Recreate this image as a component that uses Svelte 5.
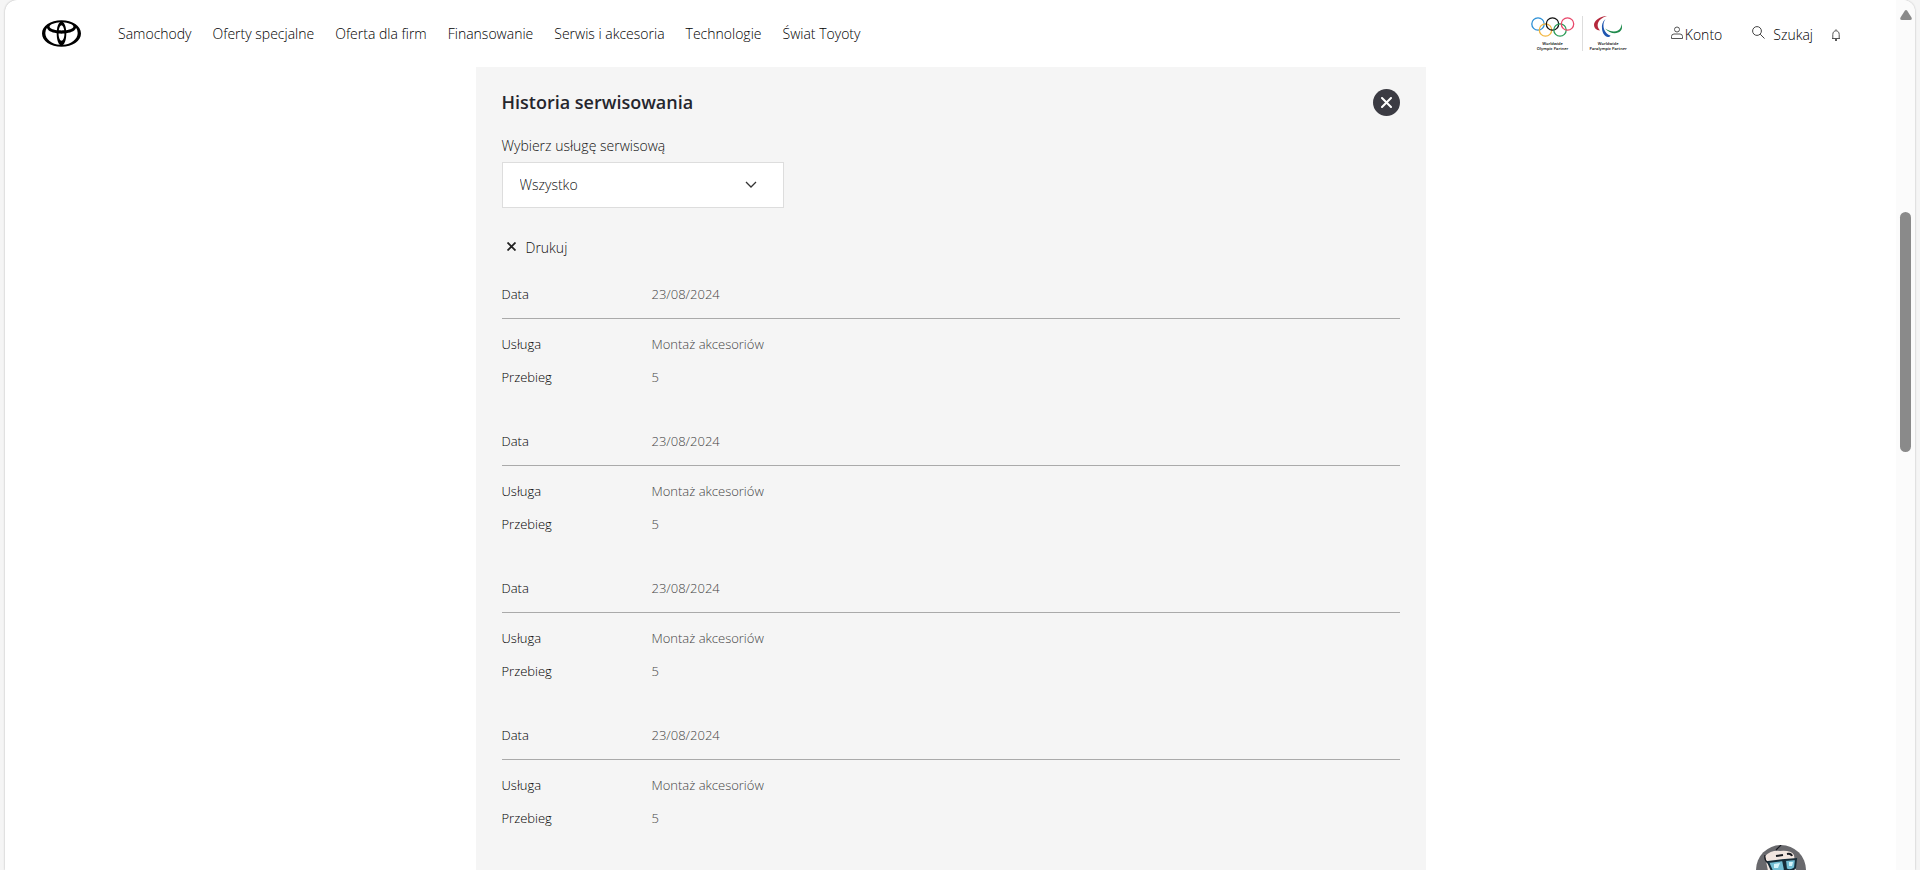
<script lang="ts">
  const navItems = [
    "Samochody",
    "Oferty specjalne",
    "Oferta dla firm",
    "Finansowanie",
    "Serwis i akcesoria",
    "Technologie",
    "Świat Toyoty",
  ];

  const services = ["Wszystko", "Montaż akcesoriów"];

  const history = [
    { date: "23/08/2024", service: "Montaż akcesoriów", mileage: 5 },
    { date: "23/08/2024", service: "Montaż akcesoriów", mileage: 5 },
    { date: "23/08/2024", service: "Montaż akcesoriów", mileage: 5 },
    { date: "23/08/2024", service: "Montaż akcesoriów", mileage: 5 },
  ];

  let selected = $state("Wszystko");
  let open = $state(true);

  const visible = $derived(
    selected === "Wszystko" ? history : history.filter((h) => h.service === selected)
  );
</script>

<div class="frame">
  <div class="page">
    <header class="topbar">
      <a href="/" class="logo" aria-label="Toyota">
        <svg viewBox="0 3.8 24 16.4" width="39" height="27">
          <path d="M12 3.848C5.223 3.848 0 7.298 0 12c0 4.702 5.224 8.152 12 8.152S24 16.702 24 12c0-4.702-5.223-8.152-12-8.152zm7.334 3.839c0 1.08-1.725 1.913-4.488 2.246-.26-2.58-1.005-4.279-1.963-4.913 2.948.184 6.45 1.227 6.45 2.667zM12 16.401c-.96 0-1.746-1.5-1.808-4.389.577.047 1.18.072 1.808.072.628 0 1.23-.025 1.807-.072-.061 2.89-.847 4.389-1.807 4.389zm0-6.308c-.59 0-1.155-.019-1.69-.054.261-1.728.92-3.15 1.69-3.15.77 0 1.428 1.422 1.689 3.15-.535.034-1.1.054-1.689.054zm-.883-5.075c-.958.634-1.703 2.332-1.965 4.915-2.763-.333-4.488-1.166-4.488-2.246 0-1.44 3.503-2.484 6.453-2.669zM2.037 11.68a5.265 5.265 0 011.048-3.164c.27 1.547 2.522 2.881 5.972 3.37V12c0 3.772.879 6.203 2.087 6.97-5.107-.321-9.107-3.48-9.107-7.29zm10.823 7.29c1.207-.767 2.087-3.198 2.087-6.97v-.115c3.447-.488 5.704-1.826 5.972-3.37a5.26 5.26 0 011.049 3.165c-.004 3.81-4.008 6.969-9.109 7.29z" />
        </svg>
      </a>

      <nav>
        {#each navItems as item}
          <a href="/">{item}</a>
        {/each}
      </nav>

      <div class="partners">
        <div class="partner">
          <svg viewBox="0 0 44 22" width="44" height="22" fill="none" stroke-width="1.3">
            <circle cx="7" cy="8" r="6.2" stroke="#2b8fd6" />
            <circle cx="14.5" cy="14" r="6.2" stroke="#f2b740" />
            <circle cx="21.5" cy="8" r="6.2" stroke="#111" />
            <circle cx="29" cy="14" r="6.2" stroke="#2a9c57" />
            <circle cx="36.5" cy="8" r="6.2" stroke="#e8476a" />
          </svg>
          <p>Worldwide<br />Olympic Partner</p>
        </div>
        <div class="partner">
          <svg viewBox="0 0 30 22" width="30" height="22">
            <path fill="#b5283c" d="M14 0C6 .5 1 5 1 9c0 3 2 5 6 5.600C5 12 4 10 5 7 6 4 9 1.500 14 0z" />
            <path fill="#1f57b0" d="M12.500 3C9.500 5.500 8.500 9 9 13c.5 4.500 3 7.500 6 8 1 0 2-.5 2.500-1.500C13 18.500 10 13 10.500 8.500c.2-2.500 1-4 2-5.500z" />
            <path fill="#1f8a4c" d="M28 8c2 3.500 1 7-3 8.600-4 1.500-9 .2-13-4.100 5 3 9.500 3.700 13 2 2.500-1.500 3.500-3.500 3-6.500z" />
          </svg>
          <p>Worldwide<br />Paralympic Partner</p>
        </div>
      </div>

      <div class="tools">
        <a href="/konto" class="account">
          <svg viewBox="0 0 12 14" width="12" height="14" fill="none" stroke="#555">
            <circle cx="6" cy="3.500" r="2.500" />
            <path d="M.5 12.500v-2q0-2.500 2.500-2.500h6q2.500 0 2.500 2.500v2z" />
          </svg>
          Konto
        </a>
        <button class="search">
          <svg viewBox="0 0 13 13" width="13" height="13" fill="none" stroke="#444">
            <circle cx="5" cy="5" r="4.400" />
            <path d="M8.200 8.200l4.300 4.300" />
          </svg>
          Szukaj
        </button>
        <button class="bell" aria-label="Powiadomienia">
          <svg viewBox="0 0 10 12" width="10" height="12" fill="none" stroke="#555">
            <path d="M5 .3v1M1 9.500h8M1.800 9.500V5.500c0-5 6.400-5 6.400 0v4" />
            <path d="M4 11h2" stroke="#222" stroke-width="1.500" />
          </svg>
        </button>
      </div>
    </header>

    {#if open}
      <main class="panel">
        <div class="panel-head">
          <h1>Historia serwisowania</h1>
          <button class="close" aria-label="Zamknij" onclick={() => (open = false)}>
            <svg viewBox="0 0 11 11" width="11" height="11" stroke="#fff" stroke-width="2" stroke-linecap="round">
              <path d="M1 1l9 9M10 1l-9 9" />
            </svg>
          </button>
        </div>

        <label for="service">Wybierz usługę serwisową</label>
        <div class="select-wrap">
          <select id="service" bind:value={selected}>
            {#each services as service}
              <option>{service}</option>
            {/each}
          </select>
          <svg viewBox="0 0 12 8" width="12" height="8" fill="none" stroke="#333" stroke-width="1.300">
            <path d="M1 1l5 5 5-5" />
          </svg>
        </div>

        <button class="print" onclick={() => window.print()}>
          <svg viewBox="0 0 9 9" width="9" height="9" stroke="#222" stroke-width="1.800">
            <path d="M.5.5l8 8M8.500.5l-8 8" />
          </svg>
          Drukuj
        </button>

        {#each visible as entry}
          <dl>
            <div class="row date">
              <dt>Data</dt>
              <dd>{entry.date}</dd>
            </div>
            <div class="row">
              <dt>Usługa</dt>
              <dd>{entry.service}</dd>
            </div>
            <div class="row">
              <dt>Przebieg</dt>
              <dd>{entry.mileage}</dd>
            </div>
          </dl>
        {/each}
      </main>
    {/if}
  </div>

  <div class="scrollbar" aria-hidden="true">
    <svg viewBox="0 0 12 10" width="12" height="10">
      <path fill="#8a8a8a" d="M4.800.8q1.200-1.400 2.400 0l4.300 6.700q1 2.500-1.500 2.500H2Q-.5 10 .5 7.500z" />
    </svg>
    <div class="thumb"></div>
  </div>

  <button class="chat" aria-label="Czat">
    <svg viewBox="0 0 50 50" width="50" height="50">
      <circle cx="25" cy="25" r="25" fill="#69696d" />
      <path fill="#f2e6e0" d="M9 11q6-6 15-5 11-1 14 4l2 14-6 17H19L12 26z" />
      <path fill="none" stroke="#17191f" stroke-width="1.200" d="M20 5l5-5M12 18q-4-3-3-8" />
      <path fill="none" stroke="#17191f" stroke-width="2" d="M20 11l7-1M31 9q4-1 5 2" />
      <path fill="#72bdd3" stroke="#162c38" stroke-width="2" d="M12 17l15-2 2 10q-7 5-13 1zM29 15l11-1-1 9q-5 4-9 1z" />
      <path fill="#d6f4fa" d="M18 19l6-1-2 5h-4zM33 17l4 0-1 4h-3z" />
    </svg>
  </button>
</div>

<style>
  :global(body) {
    margin: 0;
    background: #f5f5f5;
  }

  .frame {
    position: relative;
    box-sizing: border-box;
    height: 100vh;
    margin: 0 5px;
    display: flex;
    overflow: hidden;
    background: #fff;
    border-radius: 12px 12px 0 0;
    box-shadow: 0 0 2px rgba(0, 0, 0, 0.3);
    font-family: "Open Sans", "Noto Sans", sans-serif;
    font-weight: 300;
    font-size: 14px;
    line-height: 20px;
    color: #000;
  }

  .page {
    flex: 1;
    min-width: 0;
  }

  a {
    color: inherit;
    text-decoration: none;
  }

  button {
    padding: 0;
    border: none;
    background: none;
    font: inherit;
    color: inherit;
    cursor: pointer;
  }

  svg {
    display: block;
    flex-shrink: 0;
  }

  .topbar {
    box-sizing: border-box;
    height: 67px;
    padding: 0 55px 0 37px;
    display: flex;
    align-items: center;
  }

  nav {
    display: flex;
    gap: 21px;
    margin-left: 37px;
    white-space: nowrap;
  }

  .partners {
    display: flex;
    margin-left: auto;
  }

  .partner {
    display: flex;
    flex-direction: column;
    align-items: center;
    padding: 0 7px;
  }

  .partner + .partner {
    border-left: 1px solid #ddd;
  }

  .partner p {
    margin: 3px 0 0;
    font-size: 4px;
    font-weight: 600;
    line-height: 5px;
    text-align: center;
  }

  .tools {
    display: flex;
    align-items: center;
    margin-left: 37px;
    padding-top: 2px;
  }

  .account,
  .search {
    display: flex;
    align-items: center;
  }

  .account svg,
  .search svg,
  .print svg {
    margin-bottom: 4px;
  }

  .account {
    gap: 2px;
  }

  .search {
    gap: 8px;
    margin-left: 30px;
  }

  .bell {
    margin-left: 18px;
  }

  .panel {
    box-sizing: border-box;
    max-width: 950px;
    min-height: 100%;
    margin: 0 auto;
    padding: 22px 26px;
    background: #f5f5f5;
  }

  .panel-head {
    display: flex;
    justify-content: space-between;
    align-items: flex-start;
    margin-bottom: 20px;
  }

  h1 {
    margin: 0;
    font-size: 18px;
    font-weight: 600;
    line-height: 26px;
    color: #25262d;
  }

  .close {
    width: 27px;
    height: 27px;
    display: grid;
    place-items: center;
    border-radius: 50%;
    background: #3b3b43;
  }

  label {
    display: block;
    color: #111;
  }

  .select-wrap {
    position: relative;
    width: 282px;
    margin-top: 6px;
  }

  select {
    appearance: none;
    box-sizing: border-box;
    width: 100%;
    height: 46px;
    padding: 0 40px 0 17px;
    border: 1px solid #ddd;
    border-radius: 0;
    background: #fff;
    font: inherit;
    color: #111;
  }

  .select-wrap svg {
    position: absolute;
    right: 27px;
    top: 19px;
    pointer-events: none;
  }

  .print {
    display: flex;
    align-items: center;
    gap: 10px;
    margin: 30px 0 26px;
    padding-left: 5px;
    color: #111;
  }

  dl {
    margin: 0 0 44px;
    font-size: 13px;
  }

  .row {
    display: flex;
    margin-bottom: 13px;
  }

  .row.date {
    padding-bottom: 14px;
    margin-bottom: 15px;
    border-bottom: 1px solid #aaa;
  }

  dt {
    width: 150px;
    color: #000;
  }

  dd {
    margin: 0;
    color: #444;
  }

  .scrollbar {
    box-sizing: border-box;
    width: 19px;
    padding-top: 10px;
    display: flex;
    flex-direction: column;
    align-items: center;
    background: #fbfbfb;
  }

  .thumb {
    width: 11px;
    height: 240px;
    margin-top: 192px;
    border-radius: 6px;
    background: #8a8a8a;
  }

  .chat {
    position: absolute;
    right: 109px;
    bottom: -25px;
  }
</style>
